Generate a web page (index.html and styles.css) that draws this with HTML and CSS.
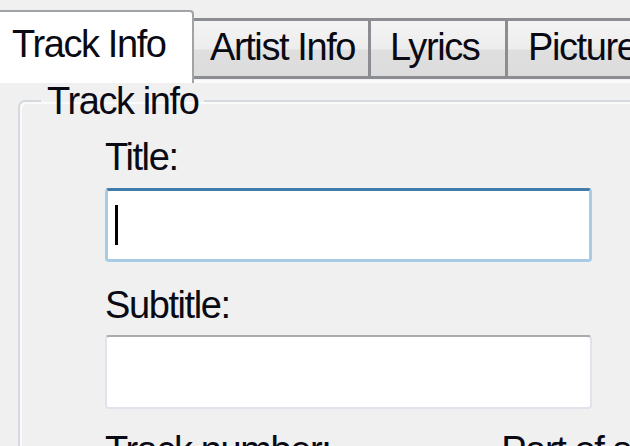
FILE: index.html
```html
<!DOCTYPE html>
<html>
<head>
<meta charset="utf-8">
<link rel="stylesheet" href="styles.css">
</head>
<body>
<div class="dialog">
  <div class="tabstrip">
    <div class="tab active">Track Info</div>
    <div class="tab t-artist">Artist Info</div>
    <div class="tab t-lyrics">Lyrics</div>
    <div class="tab t-picture">Pictures</div>
  </div>
  <div class="panel">
    <fieldset class="group">
      <legend class="legend">Track info</legend>
      <div class="content">
        <div class="field first">
          <label class="label">Title:</label>
          <div class="input focused"><span class="caret"></span></div>
        </div>
        <div class="field">
          <label class="label">Subtitle:</label>
          <div class="input"></div>
        </div>
        <div class="row">
          <label class="label">Track number:</label>
          <label class="label part">Part of set:</label>
        </div>
      </div>
    </fieldset>
  </div>
</div>
</body>
</html>
```

FILE: styles.css
```css
html, body {
  margin: 0;
  padding: 0;
  background: #f0f0f0;
  overflow: hidden;
}
.dialog {
  width: 630px;
  height: 446px;
  overflow: hidden;
  font-family: "Liberation Sans", Arial, sans-serif;
  font-size: 38px;
  letter-spacing: -1.4px;
  line-height: 48px;
  color: #0a0a14;
}
.tabstrip {
  display: flex;
  align-items: flex-end;
  height: 80px;
  white-space: nowrap;
}
.tab {
  box-sizing: border-box;
  height: 61px;
  margin-bottom: 1px;
  border: 3px solid #8b8d92;
  border-left-width: 0;
  background: linear-gradient(#f4f4f4 0%, #ededed 50%, #dfdfdf 53%, #dcdcdc 100%);
  padding: 2px 0 0 16px;
  flex: none;
  overflow: hidden;
}
.tab.active {
  width: 194px;
  height: 73px;
  margin-bottom: -3px;
  border: none;
  border-top: 2px solid #a0a3a8;
  border-right: 2px solid #a0a3a8;
  border-top-right-radius: 4px;
  background: #ffffff;
  padding: 8px 0 0 12px;
  position: relative;
}
.t-artist { width: 177px; }
.t-lyrics { width: 137px; padding-left: 19px; }
.t-picture { width: 140px; padding-left: 20px; }
.panel {
  border-top: 3px solid #fbfbfb;
  padding: 0 0 0 18px;
}
.group {
  margin: 0;
  border: 2px solid #d3d9de;
  border-right: none;
  border-bottom: none;
  border-top-left-radius: 7px;
  box-shadow: inset 2px 2px 0 #fafafa;
  padding: 0;
  height: 400px;
  min-width: 0;
}
.legend {
  margin-left: 21px;
  padding: 0 6px;
  line-height: 36px;
}
.content {
  padding-left: 85px;
}
.field {
  display: flex;
  flex-direction: column;
}
.label {
  display: block;
  white-space: nowrap;
}
.field .label {
  margin-top: 19px;
  margin-bottom: 6px;
}
.field.first .label {
  margin-top: 14px;
  margin-bottom: 7px;
}
.input {
  box-sizing: border-box;
  width: 487px;
  height: 74px;
  background: #fff;
  border: 2px solid #e0e3ea;
  border-top-color: #a9abb1;
  border-radius: 4px;
  display: flex;
  align-items: center;
  padding-left: 7px;
}
.input.focused {
  border: 3px solid #a8cbe6;
  border-top-color: #3f7bab;
}
.caret {
  width: 3px;
  height: 40px;
  background: #000;
}
.row {
  display: flex;
  margin-top: 17px;
}
.part {
  margin-left: 171px;
}
```
